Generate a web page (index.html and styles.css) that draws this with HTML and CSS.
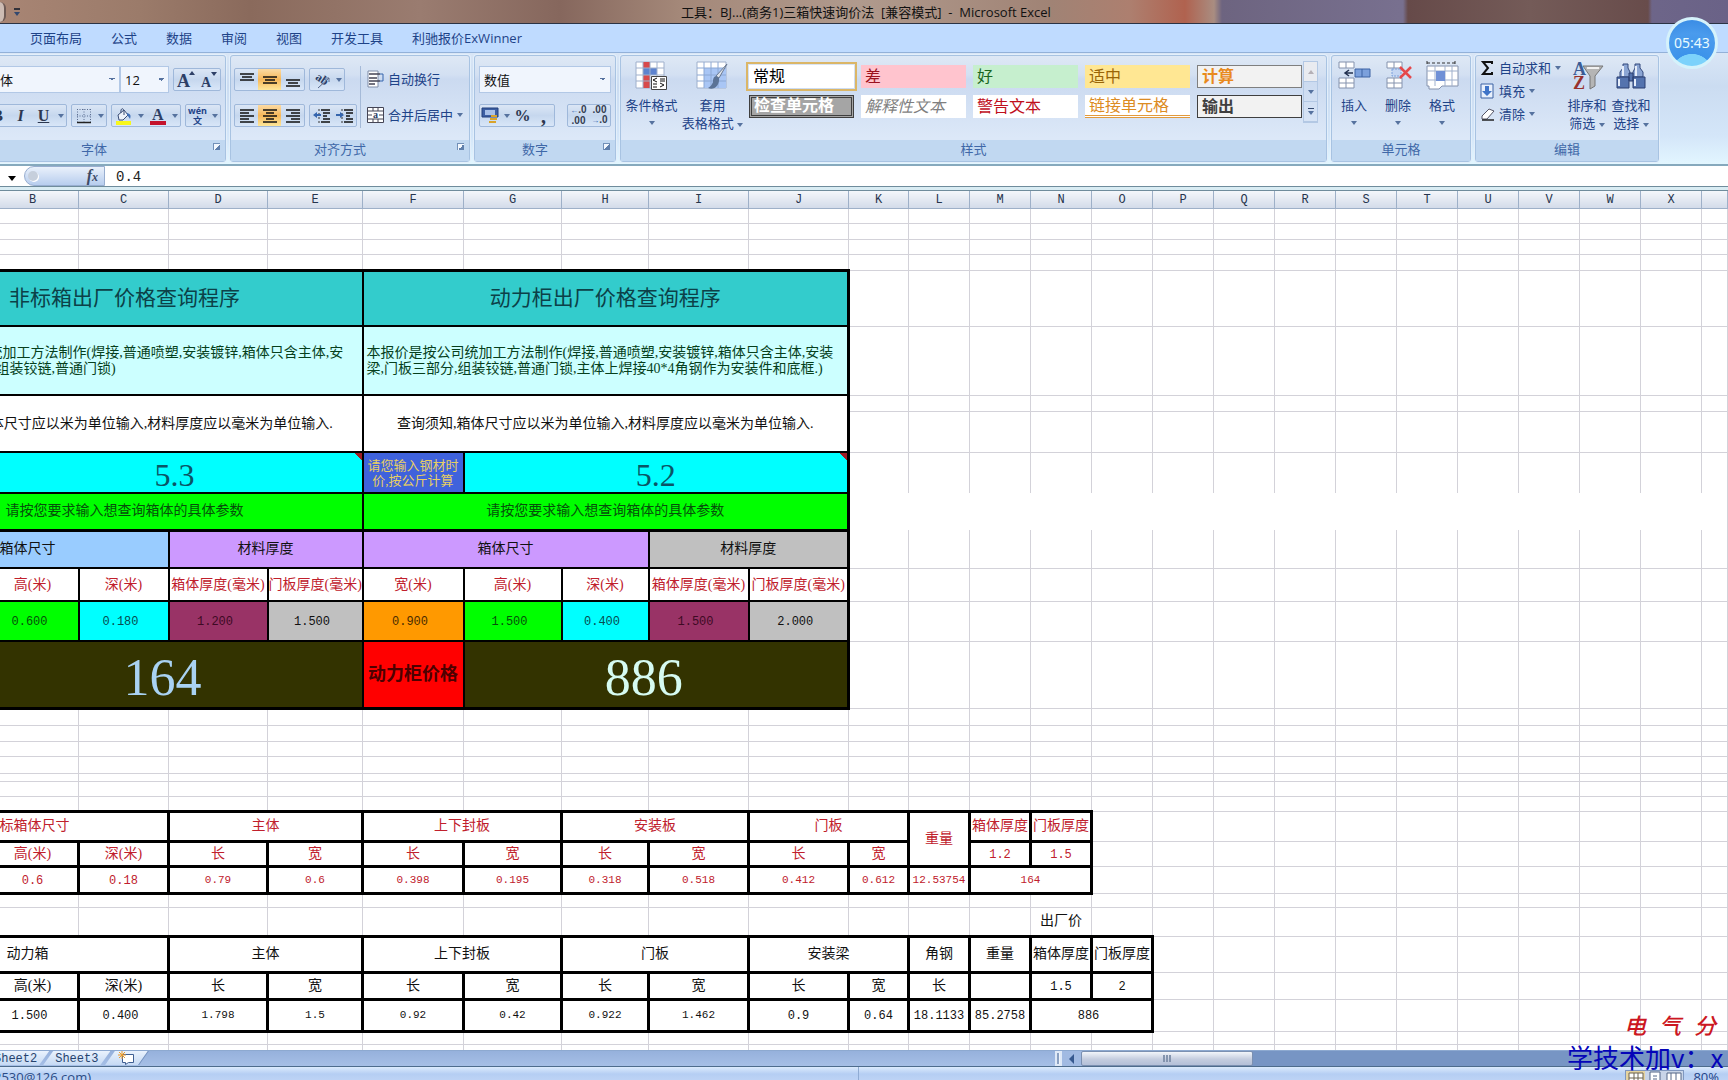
FILE: index.html
```html
<!DOCTYPE html>
<html lang="zh-CN">
<head>
<meta charset="utf-8">
<title>工具：BJ...(商务1)三箱快速询价法 - Microsoft Excel</title>
<link rel="stylesheet" href="styles.css">
</head>
<body>
<header class="title-bar">
  <span class="office-edge"></span>
  <button class="quick-more" aria-label="自定义快速访问工具栏"><span class="quick-line"></span><span class="arrow dark"></span></button>
  <h1 class="title">工具：BJ...(商务1)三箱快速询价法 &nbsp;[兼容模式] &nbsp;- &nbsp;Microsoft Excel</h1>
</header>

<nav class="tabs">
  <a href="#layout">页面布局</a>
  <a href="#formula">公式</a>
  <a href="#data">数据</a>
  <a href="#review">审阅</a>
  <a href="#view">视图</a>
  <a href="#dev">开发工具</a>
  <a href="#exwinner">利驰报价ExWinner</a>
</nav>

<section class="ribbon">
  <div class="group font-group">
    <div class="body rows">
      <div class="row end">
        <select class="combo font-name" aria-label="字体名称"><option>宋体</option></select><select class="combo font-size" aria-label="字号"><option>12</option></select>
        <span class="set">
          <button aria-label="增大字号"><svg width="20" height="20" viewBox="0 0 20 20"><text x="1" y="17" class="glyph big">A</text><path d="M13 5l3-4 3 4z" fill="#2d3f66"/></svg></button>
          <button aria-label="减小字号"><svg width="20" height="20" viewBox="0 0 20 20"><text x="2" y="17" class="glyph small">A</text><path d="M12 2h6l-3 4z" fill="#2d3f66"/></svg></button>
        </span>
      </div>
      <div class="row end">
        <span class="set">
          <button class="ltr bold">B</button><button class="ltr ital">I</button><button class="ltr under">U</button><button class="drop" aria-label="下划线选项"><span class="arrow"></span></button>
        </span>
        <span class="set">
          <button aria-label="边框"><svg width="16" height="16" viewBox="0 0 16 16"><path d="M1.500 1v13M8 1v13M14.500 1v13M1 1.500h14M1 8h14" stroke="#5a6c90" stroke-dasharray="1 1.500" fill="none"/><path d="M1 14.500h14" stroke="#222" stroke-width="1.500"/></svg></button><button class="drop" aria-label="边框选项"><span class="arrow"></span></button>
        </span>
        <span class="set">
          <button aria-label="填充颜色"><svg width="18" height="18" viewBox="0 0 18 18"><path d="M3 8l6-5 4 5-5 5H4z" fill="#eef3fb" stroke="#3b4d75"/><path d="M6 6c-1-5 3-6 3-1v3" fill="none" stroke="#3b4d75"/><path d="M12 6c4 1 4 3 3 6-1-2-2-3-3-4z" fill="#3f6fb8"/><path d="M1 14h15v4H1z" fill="#f7f71c"/></svg></button><button class="drop" aria-label="填充选项"><span class="arrow"></span></button>
          <button aria-label="字体颜色"><svg width="18" height="18" viewBox="0 0 18 18"><text x="3" y="13" class="glyph med">A</text><path d="M1 14h16v4H1z" fill="#c4122c"/></svg></button><button class="drop" aria-label="字体颜色选项"><span class="arrow"></span></button>
        </span>
        <span class="set">
          <button class="pinyin"><span>wén</span><span>文</span></button><button class="drop" aria-label="拼音选项"><span class="arrow"></span></button>
        </span>
      </div>
    </div>
    <div class="label with-launch">字体<button class="launch" aria-label="字体设置"></button></div>
  </div>

  <div class="group align-group">
    <div class="body cols">
      <div class="rows">
        <div class="row">
          <span class="set">
            <button aria-label="顶端对齐"><svg width="16" height="16"><path d="M1 2h14M3 5h10M1 8h14" stroke="#111" stroke-width="1.500"/></svg></button>
            <button class="on" aria-label="垂直居中"><svg width="16" height="16"><path d="M1 5h14M3 8h10M1 11h14" stroke="#111" stroke-width="1.500"/></svg></button>
            <button aria-label="底端对齐"><svg width="16" height="16"><path d="M1 8h14M3 11h10M1 14h14" stroke="#111" stroke-width="1.500"/></svg></button>
          </span>
          <span class="set">
            <button aria-label="方向"><svg width="18" height="18"><text x="2" y="9" class="glyph tiny" transform="rotate(35 4 8)">ab</text><path d="M5 17L16 7M12 7h4v4" stroke="#56688c" fill="none"/></svg></button><button class="drop" aria-label="方向选项"><span class="arrow"></span></button>
          </span>
        </div>
        <div class="row">
          <span class="set">
            <button aria-label="左对齐"><svg width="16" height="16"><path d="M1 2h14M1 5h9M1 8h14M1 11h9M1 14h14" stroke="#111" stroke-width="1.500"/></svg></button>
            <button class="on" aria-label="居中"><svg width="16" height="16"><path d="M1 2h14M4 5h8M1 8h14M4 11h8M1 14h14" stroke="#111" stroke-width="1.500"/></svg></button>
            <button aria-label="右对齐"><svg width="16" height="16"><path d="M1 2h14M6 5h9M1 8h14M6 11h9M1 14h14" stroke="#111" stroke-width="1.500"/></svg></button>
          </span>
          <span class="set">
            <button aria-label="减少缩进"><svg width="18" height="16"><path d="M8 2h9M10 5h7M10 8h4M10 11h7M8 14h9" stroke="#111" stroke-width="1.500"/><path d="M6 1v15" stroke="#333" stroke-dasharray="2 2"/><path d="M0 7l4-3v2h4v2H4v2z" fill="#3565ad"/></svg></button>
            <button aria-label="增加缩进"><svg width="18" height="16"><path d="M8 2h9M10 5h7M10 8h4M10 11h7M8 14h9" stroke="#111" stroke-width="1.500"/><path d="M6 1v15" stroke="#333" stroke-dasharray="2 2"/><path d="M8 7L4 4v2H0v2h4v2z" fill="#3565ad"/></svg></button>
          </span>
        </div>
      </div>
      <div class="rows divided">
        <button class="row wide"><svg width="17" height="18"><path d="M1 1h10v16H1z" fill="#fff" stroke="#7e8ca8"/><path d="M2 4h11M2 8h8M2 11h11M2 14h6" stroke="#445" stroke-width="1.500"/><path d="M13 4h3v7h-3" fill="none" stroke="#3565ad"/></svg><span>自动换行</span></button>
        <button class="row wide"><svg width="17" height="18"><path d="M.5 1.500h16v15H.5z" fill="#fff" stroke="#445"/><path d="M1 5h15M1 13h15M6 1v4M11 1v4M6 13v4M11 13v4M1 9h4M12 9h4" stroke="#445"/><text x="6" y="12" class="glyph micro">a</text></svg><span>合并后居中</span><span class="arrow"></span></button>
      </div>
    </div>
    <div class="label with-launch">对齐方式<button class="launch" aria-label="对齐设置"></button></div>
  </div>

  <div class="group number-group">
    <div class="body rows">
      <div class="row"><select class="combo number-format" aria-label="数字格式"><option>数值</option></select></div>
      <div class="row spread">
        <span class="set">
          <button aria-label="会计数字格式"><svg width="20" height="18"><path d="M1 1h16v9H1z" fill="#3d5fa3" stroke="#24407c"/><path d="M4 3h10v5H4z" fill="#a8c0e8"/><path d="M10 9h6M9 12h7M8 15h7" stroke="#d9a32b" stroke-width="2"/></svg></button><button class="drop" aria-label="会计选项"><span class="arrow"></span></button><button class="ltr">%</button><button class="ltr comma">,</button>
        </span>
        <span class="set">
          <button class="dec"><span><b>←</b>.0</span><span>.00</span></button>
          <button class="dec"><span>.00</span><span><b>→</b>.0</span></button>
        </span>
      </div>
    </div>
    <div class="label with-launch">数字<button class="launch" aria-label="数字设置"></button></div>
  </div>

  <div class="group style-group">
    <div class="body cols">
      <button class="large"><svg width="33" height="30"><path d="M1 1h28v26H1z" fill="#fff" stroke="#9fb0cc"/><path d="M8 1h7v6H8zM8 14h7v6H8zM8 20h7v7H8z" fill="#d8494b"/><path d="M8 7h14v7H8z" fill="#5d83cf"/><path d="M1 7h28M1 14h28M1 20h28M8 1v26M15 1v26M22 1v26" stroke="#9fb0cc"/><path d="M16.500 15.500h15v13h-15z" fill="#fff" stroke="#444"/><path d="M22 17l-4 2 4 2M18 23h4M25 18h5M25 20h5M25 22l4 2-4 2M18 26h4" stroke="#111" fill="none"/></svg><span>条件格式</span><span class="arrow"></span></button>
      <button class="large"><svg width="33" height="30"><path d="M1 1h29v26H1z" fill="#fff" stroke="#9fb0cc"/><path d="M8 7h22v20H8z" fill="#a9c6f5"/><path d="M1 7h29M1 14h29M1 20h29M8 1v26M15 1v26M22 1v26" stroke="#8ca8d4"/><path d="M31 3L23 17l-3-2z" fill="#dde3ec" stroke="#6b7a92"/><path d="M23 17l-3-2c-3 1-3 4-3 6-1 3-3 5-5 6 6 3 12-3 11-10z" fill="#5b7396"/></svg><span>套用</span><span>表格格式 <i class="arrow"></i></span></button>
      <div class="gallery">
        <button class="s-normal">常规</button><button class="s-bad">差</button><button class="s-good">好</button><button class="s-mid">适中</button><button class="s-calc">计算</button>
        <button class="s-check">检查单元格</button><button class="s-note">解释性文本</button><button class="s-warn">警告文本</button><button class="s-link">链接单元格</button><button class="s-out">输出</button>
      </div>
      <div class="spinner">
        <button aria-label="上一行" class="off"><span class="arrow up"></span></button>
        <button aria-label="下一行"><span class="arrow"></span></button>
        <button aria-label="其他样式"><span class="bar"></span><span class="arrow"></span></button>
      </div>
    </div>
    <div class="label">样式</div>
  </div>

  <div class="group cell-group">
    <div class="body cols">
      <button class="large"><svg width="33" height="30"><path d="M1 1h15v6H1zM1 17h15v10H1zM8 1v6M8 17v10M1 22h15" fill="#fff" stroke="#8492ad"/><path d="M17 8h15v8H17z" fill="#7ba0dc" stroke="#3d62a4"/><path d="M24 8v8" stroke="#3d62a4"/><path d="M15 12H8M11 9l-4 3 4 3" stroke="#22304f" stroke-width="1.500" fill="none"/></svg><span>插入</span><span class="arrow"></span></button>
      <button class="large"><svg width="33" height="30"><path d="M5 1h15v6H5zM5 17h15v10H5zM12 1v6M12 17v10M5 22h15" fill="#fff" stroke="#8492ad"/><path d="M10 8h9v7h-9z" fill="#c4d6f3" stroke="#7ba0dc" stroke-dasharray="2 1"/><path d="M18 6l11 11M29 6L18 17" stroke="#e5484b" stroke-width="2.500"/></svg><span>删除</span><span class="arrow"></span></button>
      <button class="large"><svg width="33" height="30"><path d="M1 2h28M1 0v4M29 0v4" stroke="#333" stroke-dasharray="3 2"/><path d="M1 5h31v20H16l-3 3H3v-3H1z" fill="#fff" stroke="#8492ad"/><path d="M1 10h31M1 19h31M9 5v20M19 5v20M26 5v20" stroke="#9fb0cc"/><path d="M10 10h9v10h-9z" fill="#6f90d6"/></svg><span>格式</span><span class="arrow"></span></button>
    </div>
    <div class="label">单元格</div>
  </div>

  <div class="group edit-group">
    <div class="body cols">
      <div class="menu">
        <button><svg width="15" height="16"><path d="M12 4V2H3l5 6-5 6h9v-2" fill="none" stroke="#111" stroke-width="2"/></svg><span>自动求和</span><span class="arrow"></span></button>
        <button><svg width="15" height="16"><path d="M1 1h12v14H1z" fill="#e8f0fc" stroke="#3d62a4"/><path d="M5 3h4v5h3l-5 5-5-5h3z" fill="#3f74c8"/></svg><span>填充</span><span class="arrow"></span></button>
        <button><svg width="15" height="16"><path d="M2 10l7-7 5 2-7 8-5 0z" fill="#fff" stroke="#556"/><path d="M2 14h12" stroke="#222" stroke-width="1.500"/></svg><span>清除</span><span class="arrow"></span></button>
      </div>
      <button class="large"><svg width="33" height="30"><path d="M12 5h20L24 15v10l-5 3V15z" fill="#b5b5b5" stroke="#777"/><path d="M16 7h12" stroke="#f1f1f1" stroke-width="2"/><text x="2" y="14" class="glyph sort-a">A</text><text x="2" y="28" class="glyph sort-z">Z</text></svg><span>排序和</span><span>筛选 <i class="arrow"></i></span></button>
      <button class="large"><svg width="33" height="30"><path d="M8 3h5v4l2 4v5H5v-5l3-4zM20 3h5v4l3 4v5H18v-5l2-4z" fill="#8ba5d3" stroke="#33497c"/><path d="M2 16h12v11H2zM18 16h12v11H18zM14 12h4v8h-4z" fill="#5473ae" stroke="#2a3f70"/><path d="M4 18v7M20 18v7M8 5v10M21 5v10" stroke="#e5edfa" stroke-width="2"/></svg><span>查找和</span><span>选择 <i class="arrow"></i></span></button>
    </div>
    <div class="label">编辑</div>
  </div>
</section>

<section class="formula-bar">
  <button class="name-drop" aria-label="名称框"><span class="arrow black"></span></button>
  <span class="fx-pill"><span class="knob"></span><button class="fx">f<small>x</small></button></span>
  <input class="formula" aria-label="编辑栏" value="0.4">
</section>

<main class="sheet"><table id="grid"></table></main>

<footer class="sheet-bar">
  <a class="sheet-tab first" href="#sheet2">Sheet2</a>
  <a class="sheet-tab" href="#sheet3">Sheet3</a>
  <button class="sheet-tab new" aria-label="插入工作表"><svg width="18" height="14"><path d="M4.500 3.500h11v8h-5l-3 2v-2h-3z" fill="#fff" stroke="#3f5f93"/><path d="M4 0v8M0 4h8M1 1l6 6M7 1L1 7" stroke="#eb9c2c"/></svg></button>
  <span class="fill"></span>
  <div class="scroller">
    <span class="split"></span><button class="scroll-left" aria-label="向左滚动"></button><span class="thumb"><i></i><i></i><i></i></span>
  </div>
</footer>

<footer class="status-bar">
  <span class="mail">2530@126.com)</span>
  <span class="status-rest">
    <span class="views"><button class="on" aria-label="普通"><svg width="16" height="14"><path d="M1 2h14v11H1zM1 7h14M6 2v11M10 2v11" fill="#fff" stroke="#6a6250"/></svg></button><button aria-label="页面布局"><svg width="16" height="14"><path d="M3 1h10v13H3zM6 5h4M6 8h4M6 11h4" fill="#fff" stroke="#556687"/></svg></button><button aria-label="分页预览"><svg width="16" height="14"><path d="M1 2h14v9H1zM5 2v9M10 2v9" fill="#fff" stroke="#556687"/></svg></button></span>
    <span>80%</span>
  </span>
</footer>

<div class="timer">05:43</div>
<div class="sign"><span>电</span><span>气</span><span>分</span></div>
<div class="watermark">学技术加v：x</div>
<script src="grid.js"></script>
</body>
</html>
```
FILE: styles.css
```css
* { box-sizing: border-box; }

body {
  margin: 0;
  height: 100vh;
  overflow: hidden;
  position: relative;
  display: flex;
  flex-direction: column;
  background: #fff;
  font: 13px/18px "Open Sans", "Noto Sans CJK SC", sans-serif;
  color: #1e4388;
}

button, select, input { font: inherit; color: inherit; margin: 0; }
button { border: 0; padding: 0; background: none; }
a { color: inherit; text-decoration: none; }
svg { overflow: visible; }

.arrow {
  display: inline-block;
  flex: none;
  border: 3px solid transparent;
  border-top: 4px solid #56729f;
  border-bottom: 0;
}
.arrow.dark { border-top-color: #33486f; }
.arrow.black { border-width: 5px 4px 0; border-top-color: #000; }
.arrow.up { border-top: 0; border-bottom: 4px solid #b5b0b6; }

/* title */
.title-bar {
  flex: none;
  height: 24px;
  display: flex;
  align-items: center;
  border-bottom: 1px solid #2b3344;
  background:
    linear-gradient(90deg, transparent 1403px, #664a49 1408px, #745b58 1530px, #684c4b 1648px, transparent 1652px),
    linear-gradient(90deg, #a88574 0, #9b7b6a 140px, #8a6a5c 250px, #9a7c70 420px, #86675d 560px, #a48879 680px, #b09a8d 860px, #a08375 1050px, #ad7f6f 1130px, #b0624f 1185px, #a98d81 1214px, #6d6480 1222px, #78708f 1400px, #6a6287 1728px);
}
.office-edge {
  width: 6px;
  height: 20px;
  border-right: 2px solid #6d5a55;
  border-radius: 0 9px 9px 0;
  background: #cdbcb4;
}
.quick-more { width: 22px; display: flex; flex-direction: column; align-items: center; gap: 2px; }
.quick-line { width: 6px; height: 2px; background: #33323a; }
.title { flex: 1; margin: 0 24px 0 0; text-align: center; font-size: 13px; line-height: 20px; font-weight: 400; color: #111; }

/* ribbon tabs */
.tabs {
  flex: none;
  height: 29px;
  display: flex;
  align-items: center;
  gap: 29px;
  padding-left: 30px;
  background: #bfdbff;
  border-bottom: 1px solid #93b1d8;
}

/* ribbon */
.ribbon {
  flex: none;
  height: 113px;
  padding-top: 2px;
  display: flex;
  align-items: flex-start;
  gap: 4px;
  background: linear-gradient(#d9e6f6, #cbdcf1 30%, #d4e6f9 75%, #e2f6ff);
  border-bottom: 2px solid #86a9bd;
  overflow: hidden;
}
.group {
  flex: none;
  height: 107px;
  display: flex;
  flex-direction: column;
  border: 1px solid #a8c3e2;
  border-radius: 3px;
  background: linear-gradient(#dee8f5, #d3e0f2 18%, #cbdaf0 22%, #dce8f8 78%);
  box-shadow: 0 0 0 1px #e3effb;
}
.font-group { width: 244px; margin-left: -18px; }
.align-group { width: 240px; }
.number-group { width: 142px; }
.style-group { width: 707px; }
.cell-group { width: 140px; }
.edit-group { width: 184px; }
.group .body { flex: 1; min-height: 0; }
.group .label {
  position: relative;
  flex: none;
  height: 21px;
  text-align: center;
  background: #c1d8f1;
  color: #3f68a8;
}
.group .with-launch { padding-right: 20px; }
.launch {
  position: absolute;
  right: 5px;
  top: 3px;
  width: 7px;
  height: 7px;
  border-left: 1px solid #7290b8;
  border-top: 1px solid #7290b8;
  background: linear-gradient(135deg, #f2f7fd 50%, #5f7fac 50%);
}

.rows { display: flex; flex-direction: column; gap: 9px; }
.body.rows { padding: 10px 4px 0; }
.cols { display: flex; }
.align-group .cols { padding: 10px 3px 0; gap: 3px; }
.divided { border-left: 1px solid #a5bad8; padding-left: 6px; height: 62px; }
.row { height: 27px; display: flex; align-items: center; gap: 4px; }
.row.end { justify-content: flex-end; }
.row.spread { justify-content: space-between; }
.wide { white-space: nowrap; }

.combo {
  appearance: none;
  height: 27px;
  border: 1px solid #b2c8e6;
  border-radius: 0;
  padding: 0 4px;
  color: #111;
  background-color: #f0f5fd;
  background-image: linear-gradient(135deg, #56729f 50%, transparent 50%), linear-gradient(225deg, #56729f 50%, transparent 50%);
  background-repeat: no-repeat;
  background-position: right 4px center, right 7px center;
  background-size: 3px 3px, 3px 3px;
}
.font-name { flex: none; width: 134px; padding-left: 0; margin-right: -4px; }
.font-size { flex: none; width: 49px; }
.number-format { width: 132px; }

.set { display: flex; flex: none; height: 23px; border: 1px solid #9fb8da; border-radius: 2px; background: linear-gradient(#dbe6f5, #c6d7ee 50%, #d8e6f8); }
.set button { min-width: 23px; display: flex; align-items: center; justify-content: center; }
.set button.on { background: linear-gradient(#fbdba5, #f7b759 50%, #fde69a); }
.set button.drop { min-width: 11px; }
.ltr { font: 700 16px/20px "Liberation Serif", serif; color: #2c3750; }
.ital { font-style: italic; }
.under { text-decoration: underline; }
.comma { font-size: 20px; }
.set .pinyin { flex-direction: column; font-size: 9px; line-height: 10px; font-weight: 700; }
.number-group .set button { min-width: 21px; }
.number-group .set button.drop { min-width: 11px; }
.dec { flex-direction: column; font: 700 10px/10px "Liberation Sans", sans-serif; color: #333c50; }
.dec b { color: #3565ad; font-size: 8px; }

.glyph { font-family: "Liberation Serif", serif; font-weight: 700; fill: #2d3f66; }
.glyph.big { font-size: 18px; }
.glyph.small { font-size: 14px; }
.glyph.med { font-size: 16px; }
.glyph.tiny { font-size: 12px; }
.glyph.micro { font-size: 10px; }
.glyph.sort-a { font-size: 18px; fill: #3b5c95; }
.glyph.sort-z { font-size: 18px; fill: #97322e; }

.large { flex: none; width: 44px; padding-top: 5px; display: flex; flex-direction: column; align-items: center; justify-content: flex-start; line-height: 18px; white-space: nowrap; }
.large svg { margin-bottom: 5px; flex: none; }
.large > .arrow { margin-top: 7px; }
.large span .arrow { vertical-align: middle; }
.style-group .large { width: 61px; }

.gallery { display: grid; grid-template-columns: repeat(5, 105px); grid-auto-rows: 23px; gap: 7px; margin: 9px 1px 0 6px; }
.gallery button { text-align: left; padding: 0 4px 2px; font-size: 16px; line-height: 20px; background: #fff; white-space: nowrap; }
.gallery .s-normal { color: #000; outline: 2px solid #dbb667; outline-offset: 1px; }
.gallery .s-bad { background: #ffc4ce; color: #9c1020; }
.gallery .s-good { background: #c6efce; color: #1a661d; }
.gallery .s-mid { background: #ffe793; color: #9a6507; }
.gallery .s-calc { background: #f2f2f2; color: #e98a1d; border: 1px solid #7f7f7f; font-weight: 700; }
.gallery .s-check { background: #a5a5a5; color: #fff; border: 3px double #3f3f3f; font-weight: 700; line-height: 15px; padding: 0 2px 2px; }
.gallery .s-note { color: #7f7f7f; font-style: italic; }
.gallery .s-warn { color: #c00f1c; }
.gallery .s-link { color: #dc8b23; border-bottom: 3px double #e29a3c; padding-bottom: 0; }
.gallery .s-out { background: #f2f2f2; color: #3f3f3f; border: 1px solid #3f3f3f; font-weight: 700; }
.spinner { margin-top: 5px; width: 15px; height: 62px; display: flex; flex-direction: column; border: 1px solid #b3c8e4; }
.spinner button { flex: 1; display: flex; flex-direction: column; gap: 2px; align-items: center; justify-content: center; border-bottom: 1px solid #b3c8e4; }
.spinner .off { background: #e9ebf0; }
.spinner .bar { width: 6px; height: 1px; background: #33486f; }

.menu { width: 89px; padding: 0 0 0 4px; }
.menu button { height: 23px; display: flex; align-items: center; gap: 4px; white-space: nowrap; }

/* formula bar */
.formula-bar {
  flex: none;
  height: 25px;
  display: flex;
  align-items: flex-start;
  background: linear-gradient(#fff 20px, #6f8c9c 20px, #6f8c9c 21px, #d9ecf3 21px, #d9ecf3 24px, #6f8c9c 24px);
}
.name-drop { width: 24px; height: 20px; }
.fx-pill { width: 81px; height: 20px; display: flex; align-items: center; justify-content: space-between; padding: 0 6px 0 3px; border: 1px solid #98aed0; border-radius: 10px 0 0 10px; background: linear-gradient(#eaf1fb, #b7cdee); }
.knob { width: 10px; height: 10px; border-radius: 50%; background: #c6cfdc; box-shadow: 1px 1px 0 #fff; }
.fx { font: italic 700 16px/18px "Liberation Serif", serif; color: #3c4a66; }
.fx small { font-size: 12px; }
.formula { flex: 1; height: 20px; border: 0; padding: 2px 11px 0; background: transparent; font: 14px/18px "Liberation Mono", monospace; color: #222; }

/* worksheet: column A and part of B lie left of the window */
.sheet { flex: 1; min-height: 0; overflow: hidden; }
#grid {
  width: calc(100% + 115px);
  margin-left: -115px;
  table-layout: fixed;
  border-collapse: collapse;
  font: 14px/16px "Liberation Serif", "Noto Sans CJK SC", serif;
  color: #111;
}
#grid th {
  height: 17px;
  padding: 2px 0 0;
  border: 1px solid #9eb0c8;
  border-top: 0;
  background: linear-gradient(#f4f7fb, #d3dbe9);
  font: 12px/14px "Liberation Mono", monospace;
  color: #26344d;
}
#grid td { padding: 0; border: 1px solid #d3d2d9; text-align: center; white-space: nowrap; }
#grid td.gap { border-top-style: hidden; border-bottom-style: hidden; }
#grid td.box { border: 2px solid #000; }
#grid td.et { border-top-width: 3px; }
#grid td.er { border-right-width: 3px; }
#grid td.eb { border-bottom-width: 3px; }
#grid td.cell { border: 3px solid #000; }
#grid td.red { color: #c0202c; }
#grid td.n12 { font: 12px/16px "Liberation Mono", monospace; padding-top: 2px; }
#grid td.n11 { font: 11px/16px "Liberation Mono", monospace; }
#grid td.head { background: #33cccc; font-size: 21px; line-height: 26px; color: #0c4148; }
#grid td.note { background: #ccffff; color: #063f1c; text-align: left; padding-left: 3px; }
#grid td.price { font-size: 32px; line-height: 34px; padding-top: 4px; color: #0a5566; background: linear-gradient(225deg, #a01c24 5px, #00ffff 5px); }
#grid td.ask { background: #3f62dc; color: #e8cf62; font-size: 13px; line-height: 15px; }
#grid td.lime { background: #00ff00; color: #064f0a; }
#grid td.sky { background: #99ccff; }
#grid td.violet { background: #cc99ff; }
#grid td.gray { background: #c0c0c0; }
#grid td.cyan { background: #00ffff; color: #074c50; }
#grid td.plum { background: #993366; color: #3d0a24; }
#grid td.orange { background: #ff9900; color: #4a2c00; }
#grid td.val { padding-right: 6px; }
#grid td.total { background: #333300; font-size: 52px; line-height: 52px; padding: 8px 24px 0 0; color: #d6fbf1; }
#grid td.blue { color: #a9d2f2; }
#grid td.name { background: #ff0000; color: #4c0000; font-size: 18px; line-height: 22px; font-weight: 700; }

/* sheet tabs and scroll bar */
.sheet-bar { flex: none; height: 17px; display: flex; border-top: 1px solid #8da9d0; border-bottom: 1px solid #4e6c8c; background: linear-gradient(#96b1dc, #a6bfe6); }
.sheet-tab { height: 14px; margin-right: 6px; padding: 0 6px; background: linear-gradient(#e9f2fd, #c6daf4); border-right: 1px solid #7390bd; transform: skewX(-35deg); display: flex; align-items: center; }
a.sheet-tab { font: 12px/14px "Liberation Mono", monospace; color: #26436e; transform: none; clip-path: polygon(10px 0, 100% 0, calc(100% - 10px) 100%, 0 100%); border: 0; padding: 2px 12px 0; margin-right: -6px; }
a.sheet-tab.first { margin-left: -18px; clip-path: polygon(0 0, 100% 0, calc(100% - 10px) 100%, 0 100%); }
.sheet-tab.new { margin-left: 6px; width: 34px; justify-content: center; }
.sheet-tab.new svg { transform: skewX(35deg); }
.fill { flex: 1; }
.scroller { width: 673px; display: flex; background: linear-gradient(90deg, #a1bae2 100px, #7795c4 100px); }
.split { width: 7px; background: #eff4fb; border: 2px solid #dfe9f7; box-shadow: inset 2px 0 0 #8aa0c2; }
.scroll-left { width: 19px; display: flex; align-items: center; justify-content: center; }
.scroll-left::before { content: ""; border: 5px solid transparent; border-right-color: #37598f; border-left: 0; }
.thumb { width: 172px; display: flex; align-items: center; justify-content: center; gap: 1px; border: 1px solid #7b90b1; border-radius: 2px; background: linear-gradient(#f2f5fa, #c4cddf 55%, #b4c0d8); }
.thumb i { width: 2px; height: 7px; background: #8494ae; }

/* status */
.status-bar { flex: none; height: 13px; overflow: hidden; display: flex; line-height: 21px; background: linear-gradient(#dcebfd, #b5cef3 7px, #bdd3f5); }
.mail { width: 50%; margin-left: -6px; color: #2a4b86; }
.status-rest { flex: 1; height: 20px; padding-right: 9px; border-left: 1px solid #8fabd3; display: flex; justify-content: flex-end; gap: 9px; }
.views { display: flex; margin-top: 3px; height: 17px; border: 1px solid #7f97bf; }
.views button { width: 19px; display: flex; align-items: flex-start; justify-content: center; background: #c9d5e8; }
.views .on { background: #e5d3a0; }

/* overlays */
.timer {
  position: absolute;
  right: 10px;
  top: 17px;
  width: 52px;
  height: 52px;
  border: 3px solid #d5f2fb;
  border-radius: 50%;
  background: radial-gradient(circle at 50% 120%, #7cd2fb 0 35%, #3c93ea 36%, #4a9bed 70%, #3688e2);
  text-align: center;
  font: 14px/46px "Noto Sans", sans-serif;
  color: #e8fbff;
}
.sign { position: absolute; right: 12px; bottom: 43px; display: flex; gap: 13px; font: italic 500 22px/26px "Noto Sans CJK SC", sans-serif; color: #cc1722; }
.watermark { position: absolute; left: calc(100% - 161px); bottom: 7px; font: 26px/32px "Noto Sans CJK SC", sans-serif; color: #0505b8; white-space: nowrap; }
```
FILE: grid.js
```js
const LAST = 24;
const widths = [100, 92, 90, 99, 95, 101, 98, 87, 100, 100, 60].concat(Array(13).fill(61));

// row heights, top to bottom
const heights = [15, 16, 15, 16, 56, 69, 16, 41, 41, 37, 38, 33, 40, 67,
  17, 16, 15, 17, 8, 15, 15, 30, 25, 27, 14, 29, 36, 27, 32, 13, 20];

// filled cells: row -> { column letter: [text, classes, colspan, rowspan] }
const note = '本报价是按公司统加工方法制作(焊接,普通喷塑,安装镀锌,箱体只含主体,安';
const know = '查询须知,箱体尺寸应以米为单位输入,材料厚度应以毫米为单位输入.';
const ask = '请按您要求输入想查询箱体的具体参数';
const cells = {
  4: { A: ['非标箱出厂价格查询程序', 'box et head', 5], F: ['动力柜出厂价格查询程序', 'box et er head', 5] },
  5: { A: [note + '<br>装梁,门板三部分,组装铰链,普通门锁)', 'box note', 5],
       F: [note + '装<br>梁,门板三部分,组装铰链,普通门锁,主体上焊接40*4角钢作为安装件和底框.)', 'box er note', 5] },
  6: { A: [know, 'box', 5, 2], F: [know, 'box er', 5, 2] },
  8: { A: ['', 'box'], B: ['5.3', 'box price', 4], F: ['请您输入钢材时<br>价,按公斤计算', 'box ask'], G: ['5.2', 'box er price', 4] },
  9: { A: [ask, 'box lime', 5], F: [ask, 'box er lime', 5], K: ['', 'gap', 15] },
  10: { A: ['箱体尺寸', 'box et sky', 3], D: ['材料厚度', 'box et violet', 2], F: ['箱体尺寸', 'box et violet', 3], I: ['材料厚度', 'box et er gray', 2] },
  11: { A: ['', 'box'], B: ['高(米)', 'box red'], C: ['深(米)', 'box red'], D: ['箱体厚度(毫米)', 'box red'], E: ['门板厚度(毫米)', 'box red'],
        F: ['宽(米)', 'box red'], G: ['高(米)', 'box red'], H: ['深(米)', 'box red'], I: ['箱体厚度(毫米)', 'box red'], J: ['门板厚度(毫米)', 'box er red'] },
  12: { A: ['', 'box'], B: ['0.600', 'box n12 val lime'], C: ['0.180', 'box n12 val cyan'], D: ['1.200', 'box n12 val plum'], E: ['1.500', 'box n12 val gray'],
        F: ['0.900', 'box n12 val orange'], G: ['1.500', 'box n12 val lime'], H: ['0.400', 'box n12 val cyan'], I: ['1.500', 'box n12 val plum'], J: ['2.000', 'box er n12 val gray'] },
  13: { A: ['', 'box eb'], B: ['164', 'box eb total blue', 4], F: ['动力柜价格', 'box eb name'], G: ['886', 'box eb er total', 4] },
  21: { A: ['非标箱体尺寸', 'cell red', 3], D: ['主体', 'cell red', 2], F: ['上下封板', 'cell red', 2], H: ['安装板', 'cell red', 2], J: ['门板', 'cell red', 2],
        L: ['重量', 'cell red', 1, 2], M: ['箱体厚度', 'cell red'], N: ['门板厚度', 'cell red'] },
  22: { A: ['', 'cell'], B: ['高(米)', 'cell red'], C: ['深(米)', 'cell red'], M: ['1.2', 'cell red n12'], N: ['1.5', 'cell red n12'] },
  23: { A: ['', 'cell'], B: ['0.6', 'cell red n12'], C: ['0.18', 'cell red n12'], M: ['164', 'cell red n11', 2] },
  25: { N: ['出厂价', ''] },
  26: { A: ['动力箱', 'cell', 3], D: ['主体', 'cell', 2], F: ['上下封板', 'cell', 2], H: ['门板', 'cell', 2], J: ['安装梁', 'cell', 2],
        L: ['角钢', 'cell'], M: ['重量', 'cell'], N: ['箱体厚度', 'cell'], O: ['门板厚度', 'cell'] },
  27: { A: ['', 'cell'], B: ['高(米)', 'cell'], C: ['深(米)', 'cell'], L: ['长', 'cell'], M: ['', 'cell'], N: ['1.5', 'cell n12'], O: ['2', 'cell n12'] },
  28: { A: ['', 'cell'], B: ['1.500', 'cell n12 val'], C: ['0.400', 'cell n12 val'], L: ['18.1133', 'cell n12'], M: ['85.2758', 'cell n12'], N: ['886', 'cell n12 val', 2] }
};

// runs of plain values
function run(row, first, cls, values) {
  values.forEach((v, i) => { cells[row][String.fromCharCode(first.charCodeAt(0) + i)] = [v, cls]; });
}
const pairs = ['长', '宽', '长', '宽', '长', '宽', '长', '宽'];
run(22, 'D', 'cell red', pairs);
run(27, 'D', 'cell', pairs);
run(23, 'D', 'cell red n11', ['0.79', '0.6', '0.398', '0.195', '0.318', '0.518', '0.412', '0.612', '12.53754']);
run(28, 'D', 'cell n11', ['1.798', '1.5', '0.92', '0.42', '0.922', '1.462']);
run(28, 'J', 'cell n12', ['0.9', '0.64']);

let html = '<colgroup>' + widths.map(w => `<col style="width:${w}px">`).join('') + '<col></colgroup><thead><tr>';
for (let c = 0; c <= LAST; c++) html += `<th scope="col">${c && c < LAST ? String.fromCharCode(65 + c) : ''}</th>`;
html += '</tr></thead><tbody>';

const taken = new Set();
heights.forEach((h, r) => {
  html += `<tr style="height:${h}px">`;
  for (let c = 0; c <= LAST; c++) {
    if (taken.has(r + ':' + c)) continue;
    const spec = (cells[r] || {})[String.fromCharCode(65 + c)];
    if (!spec) { html += '<td></td>'; continue; }
    const [text, cls, cs = 1, rs = 1] = spec;
    for (let i = 0; i < rs; i++) for (let j = 0; j < cs; j++) taken.add((r + i) + ':' + (c + j));
    html += `<td class="${cls}" colspan="${cs}" rowspan="${rs}">${text}</td>`;
  }
  html += '</tr>';
});
document.getElementById('grid').innerHTML = html + '</tbody>';
```
